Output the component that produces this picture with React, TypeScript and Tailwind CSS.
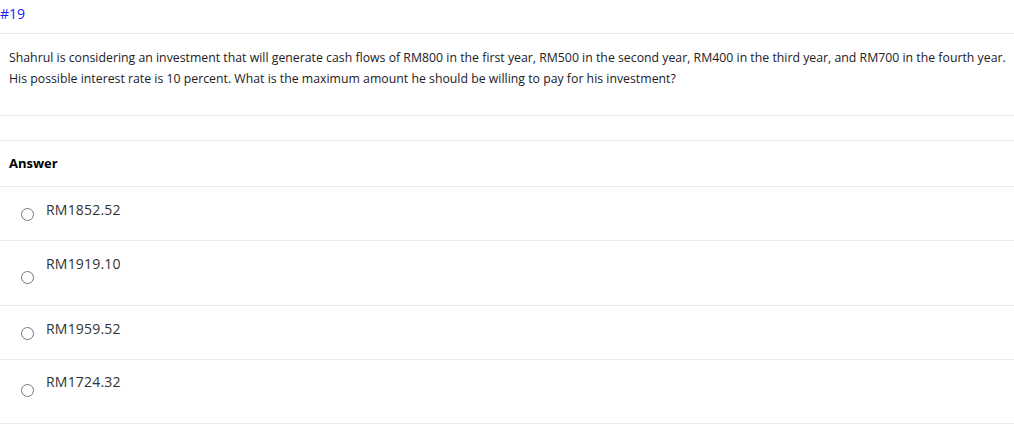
const options = [
  { label: "RM1852.52", row: "h-[54px]", radio: "mt-[21px]", text: "mt-[14px]" },
  { label: "RM1919.10", row: "h-[65px]", radio: "mt-[30px]", text: "mt-[14px]" },
  { label: "RM1959.52", row: "h-[54px]", radio: "mt-[21px]", text: "mt-[14px]" },
  { label: "RM1724.32", row: "h-[64px]", radio: "mt-[24px]", text: "mt-[13px]" },
];

function Radio() {
  return <span className="block h-[13px] w-[13px] shrink-0 rounded-full border border-[#767676] bg-white" />;
}

export default function App() {
  return (
    <div className="w-[1014px] bg-white font-['Open_Sans',sans-serif] text-[12.3px] text-[#1d2125]">
      <div className="h-[33px] pt-[5px] text-[14px] leading-[18px] text-[#1a1aff]">#19</div>

      <div className="h-[82px] border-t border-[#ebebeb] pl-[9px] pt-[13px] leading-[21px]">
        <p className="whitespace-nowrap">
          Shahrul is considering an investment that will generate cash flows of RM800 in the first year, RM500 in the
          second year, RM400 in the third year, and RM700 in the fourth year.
        </p>
        <p>His possible interest rate is 10 percent. What is the maximum amount he should be willing to pay for his investment?</p>
      </div>

      <div className="h-[25px] border-t border-[#ebebeb]" />

      <div className="flex h-[46px] items-center border-t border-[#ebebeb] pl-[9px] text-[13px] font-bold text-black">
        Answer
      </div>

      {options.map((o) => (
        <div
          key={o.label}
          className={`flex items-start gap-[12px] border-t border-[#ebebeb] pl-[21px] text-[14px] tracking-[0.2px] text-[#333] ${o.row}`}
        >
          <span className={o.radio}>
            <Radio />
          </span>
          <span className={`leading-[18px] ${o.text}`}>{o.label}</span>
        </div>
      ))}
      <div className="border-t border-[#ebebeb]" />
    </div>
  );
}
